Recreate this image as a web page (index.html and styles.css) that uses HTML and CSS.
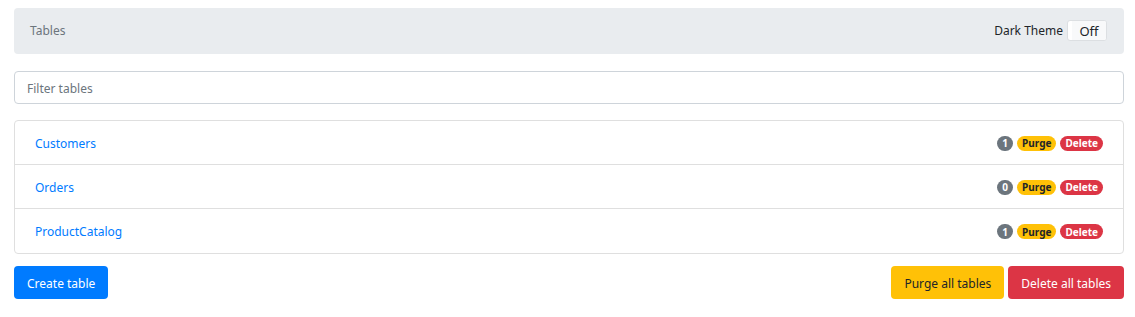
FILE: index.html
```html
<!DOCTYPE html>
<html lang="en">
<head>
  <meta charset="UTF-8">
  <meta name="viewport" content="width=device-width, initial-scale=1.0">
  <title>Tables</title>
  <link rel="stylesheet" href="styles.css">
</head>
<body>

<div class="page">
  <nav class="topbar">
    <span class="crumb">Tables</span>
    <div class="theme">
      <span>Dark Theme</span>
      <span class="toggle"><span class="toggle-off">Off</span></span>
    </div>
  </nav>

  <input type="text" class="filter" placeholder="Filter tables">

  <ul class="tables">
    <li class="row">
      <a href="#">Customers</a>
      <span class="badges">
        <span class="badge badge-count">1</span>
        <span class="badge badge-purge">Purge</span>
        <span class="badge badge-delete">Delete</span>
      </span>
    </li>
    <li class="row">
      <a href="#">Orders</a>
      <span class="badges">
        <span class="badge badge-count">0</span>
        <span class="badge badge-purge">Purge</span>
        <span class="badge badge-delete">Delete</span>
      </span>
    </li>
    <li class="row">
      <a href="#">ProductCatalog</a>
      <span class="badges">
        <span class="badge badge-count">1</span>
        <span class="badge badge-purge">Purge</span>
        <span class="badge badge-delete">Delete</span>
      </span>
    </li>
  </ul>

  <div class="actions">
    <button type="button" class="btn btn-primary">Create table</button>
    <div class="actions-right">
      <button type="button" class="btn btn-warning">Purge all tables</button>
      <button type="button" class="btn btn-danger">Delete all tables</button>
    </div>
  </div>
</div>

</body>
</html>
```

FILE: styles.css
```css
body { margin: 0; font-family: "Noto Sans", Arial, sans-serif; font-size: 12px; color: #212529; background: #fff; }
.page { padding: 8px 11px 0 14px; width: 1110px; }

.topbar { display: flex; justify-content: space-between; align-items: center; height: 46px; padding: 0 17px 1px 16px; background: #e9ecef; border-radius: 4px; box-sizing: border-box; }
.crumb { color: #6c757d; }
.theme { display: flex; align-items: center; gap: 4px; }
.toggle { display: flex; justify-content: flex-end; width: 40px; height: 21px; box-sizing: border-box; border: 1px solid #dcdfe2; border-radius: 3px; background: #fff; overflow: hidden; }
.toggle-off { width: 34px; display: flex; align-items: center; justify-content: center; background: #f8f9fa; font-size: 13px; }

.filter { display: block; width: 100%; height: 33px; margin: 17px 0 0; padding: 1px 12px 0; box-sizing: border-box; border: 1px solid #ced4da; border-radius: 4px; font-family: inherit; font-size: 12px; color: #495057; }
.filter::placeholder { color: #6c757d; }

.tables { list-style: none; margin: 16px 0 0; padding: 0; border: 1px solid #dfdfdf; border-radius: 4px; }
.row { display: flex; justify-content: space-between; align-items: center; height: 43px; padding: 1px 20px 0; box-sizing: border-box; }
.row:first-child { height: 43px; }
.row + .row { height: 44px; border-top: 1px solid #dfdfdf; }
.row:last-child { height: 45px; }
.row a { color: #007bff; text-decoration: none; }
.badges { display: flex; gap: 4px; }
.badge { display: inline-flex; align-items: center; justify-content: center; height: 15px; padding: 0 5px; border-radius: 8px; font-size: 10px; font-weight: 700; line-height: 1; }
.badge-count { width: 16px; padding: 0; background: #6c757d; color: #fff; }
.badge-purge { background: #ffc107; color: #212529; }
.badge-delete { background: #dc3545; color: #fff; }

.actions { display: flex; justify-content: space-between; margin-top: 12px; }
.actions-right { display: flex; gap: 4px; }
.btn { height: 33px; padding: 1px 13px 0; border: 0; border-radius: 4px; font-family: inherit; font-size: 12px; cursor: pointer; }
.btn-primary { background: #007bff; color: #fff; }
.btn-warning { background: #ffc107; color: #212529; }
.btn-danger { background: #dc3545; color: #fff; }
```
